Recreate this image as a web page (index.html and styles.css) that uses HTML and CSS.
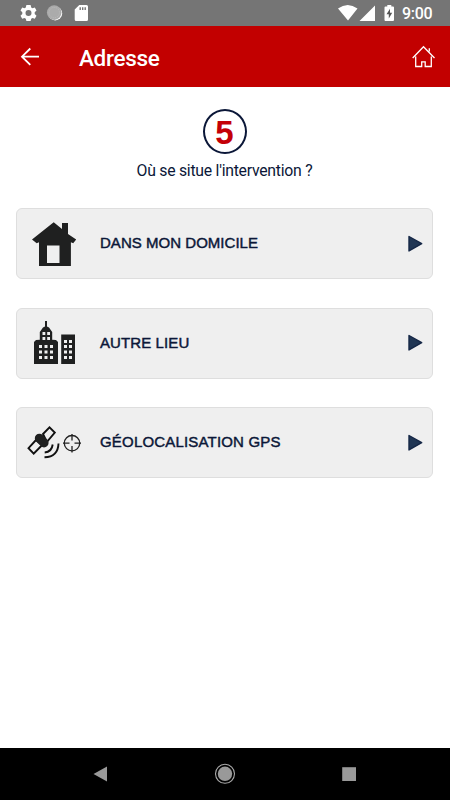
FILE: index.html
```html
<!DOCTYPE html>
<html lang="fr">
<head>
<meta charset="utf-8">
<title>Adresse</title>
<link rel="stylesheet" href="styles.css">
</head>
<body>
<div class="screen">
  <div class="status">
    <svg class="status-left" width="72" height="26" viewBox="20 0 72 26">
      <g fill="#fff">
        <path fill-rule="evenodd" d="M26.4 5h4.2l.6 2.5 1.3.8 2.3-.8 1.7 3-1.8 1.8v1.6l1.8 1.8-1.7 3-2.3-.8-1.3.8-.6 2.3h-4.2l-.6-2.3-1.3-.8-2.3.8-1.7-3 1.8-1.8v-1.6l-1.8-1.8 1.7-3 2.3.8 1.3-.8zM28.5 10.100a3 3 0 1 0 0 6 3 3 0 0 0 0-6z"/>
        <circle cx="55.200" cy="13.400" r="7"/>
        <path fill-rule="evenodd" d="M79.300 5h7.200q1.500 0 1.500 1.500v13q0 1.500-1.500 1.500h-10.300q-1.500 0-1.500-1.500v-10zM79.500 7.300v2.700h1.400V7.300zM82 7.300v2.700h1.400V7.300zM84.500 7.300v2.700h1.400V7.300z"/>
      </g>
      <circle cx="54.200" cy="12.600" r="7.300" fill="#ababab"/>
      <circle cx="54.200" cy="12.600" r="5.200" fill="none" stroke="#bcbcbc" stroke-dasharray="1 1"/>
    </svg>
    <div class="status-right">
      <svg width="60" height="26" viewBox="337 0 60 26">
        <path fill="#fff" d="M338 8.600Q347.700 1.600 357.500 8.600L348 20.600zM375 5.500V21h-15.500zM387.300 6.600V5h4v1.600h1.700q1 0 1 1v12.400q0 1-1 1h-7.500q-1 0-1-1V7.600q0-1 1-1z"/>
        <path fill="#555" d="M390 8.800l-3.500 5.400h2.300v4.400l3.400-5.800h-2.200z"/>
      </svg>
      <span class="clock">9:00</span>
    </div>
  </div>
  <header class="bar">
    <svg class="back" width="20" height="20" viewBox="20 47 20 20"><path d="M39 56.700H22M30.300 48.500L22 56.700l8.300 8.200" fill="none" stroke="#fff" stroke-width="1.800"/></svg>
    <h1 class="title">Adresse</h1>
    <svg width="24" height="24" viewBox="412 45 24 24"><path d="M412.700 58L423.500 46.700 434.500 58M415.700 56.500v10h6v-4.700h3.500v4.700h6.100v-10M429.300 51.500V48.200" fill="none" stroke="#fff" stroke-width="1.300"/></svg>
  </header>
  <main class="content">
    <div class="step">5</div>
    <p class="question">Où se situe l'intervention ?</p>
    <div class="choices">
      <div class="card">
        <svg class="pic" width="58" height="50" viewBox="26 218 58 50">
          <path fill="#1f2020" d="M53.700 221.300L62 228v-6h6v11l8.200 5.500-3 3.800-2.300-1V265H39v-23.700l-2.300 1-4.700-3.800z"/>
          <path fill="#efefef" d="M47 244.500h12.500V262H47z"/>
        </svg>
        <span class="label domicile">DANS MON DOMICILE</span>
        <svg class="go" width="16" height="18" viewBox="0 0 16 18"><path d="M2 1.500L14.700 8.700 2 15.900z"/></svg>
      </div>
      <div class="card">
        <svg class="pic" width="58" height="50" viewBox="26 318 58 50">
          <path fill="#1f2020" d="M45 321h2v5.500l2 1 3.200 4.500v7.700l3.800.3 2 2V364H34v-22l2-2 3.800-.3V332l3.200-4.500 2-1zM61.200 334.500H75V364H61.200z"/>
          <path fill="#efefef" d="M42.500 332h2.800v3h-2.800zm4.700 0H50v3h-2.800zM42.500 337h2.800v3h-2.800zm4.700 0H50v3h-2.800zM39 345h3v3h-3zm5.500 0h3v3h-3zm5.500 0h3v3h-3zM39 350.500h3v3h-3zm5.500 0h3v3h-3zm5.500 0h3v3h-3zM39 356h3v3h-3zm5.500 0h3v3h-3zm5.500 0h3v3h-3zM64 340h3v3h-3zm5 0h3v3h-3zM64 345h3v3h-3zm5 0h3v3h-3zM64 350.500h3v3h-3zm5 0h3v3h-3zM64 356h3v3h-3zm5 0h3v3h-3z"/>
        </svg>
        <span class="label lieu">AUTRE LIEU</span>
        <svg class="go" width="16" height="18" viewBox="0 0 16 18"><path d="M2 1.500L14.700 8.700 2 15.900z"/></svg>
      </div>
      <div class="card">
        <svg class="pic" width="58" height="50" viewBox="26 418 58 50">
          <g fill="none" stroke="#111" stroke-width="1.900">
            <path d="M43 434l6.500-6.700 5.300 5.300-8 9.400zM36 440l-7.500 8.200 5.200 5.500 8.500-8.700z"/>
            <path d="M52.700 444.500q-1 7.500-8 8M58.500 443.500q-.5 13.500-14 13.800"/>
          </g>
          <path d="M39.400 438.300l4.600 4.500" stroke="#1f2020" stroke-width="9.200" stroke-linecap="round"/>
          <g fill="none" stroke="#222" stroke-width="1.300"><circle cx="72" cy="443.200" r="7.700"/><path d="M63 443.200h6.500M74.500 443.200H81M72 434v6.500M72 446v6.500"/></g>
        </svg>
        <span class="label gps">GÉOLOCALISATION GPS</span>
        <svg class="go" width="16" height="18" viewBox="0 0 16 18"><path d="M2 1.500L14.700 8.700 2 15.900z"/></svg>
      </div>
    </div>
  </main>
  <nav class="nav">
    <svg width="22" height="22" viewBox="0 0 22 22"><path fill="#999" d="M3.500 11L17 3.500v15z"/></svg>
    <svg width="22" height="22" viewBox="0 0 22 22"><circle cx="11" cy="10.800" r="7.200" fill="#999"/><circle cx="11" cy="10.800" r="9.500" fill="none" stroke="#aaa" stroke-width="1.100"/></svg>
    <svg width="22" height="22" viewBox="0 0 22 22"><path fill="#999" d="M4.200 4.200H18V18H4.200z"/></svg>
  </nav>
</div>
</body>
</html>
```
FILE: styles.css
```css
* { box-sizing: border-box; }
body { margin: 0; background: #fff; font-family: Roboto, sans-serif; }
svg { display: block; flex: none; }
.screen { width: 450px; height: 800px; display: flex; flex-direction: column; overflow: hidden; }
.status { height: 26px; flex: none; display: flex; justify-content: space-between; padding: 0 17px 0 20px; background: #757575; }
.status-right { display: flex; gap: 5px; }
.clock { width: 31px; font-size: 16px; line-height: 27px; font-weight: 500; letter-spacing: -0.3px; color: #fff; white-space: nowrap; }
.bar { height: 61px; flex: none; display: flex; align-items: center; padding: 0 14px 0 20px; background: #c20000; }
.title { flex: 1; margin: 2px 0 0 39px; font-size: 22.5px; line-height: 28px; font-weight: 500; letter-spacing: -0.3px; color: #fff; }
.content { flex: 1; padding: 22px 17px 0 16px; }
.step { width: 44px; height: 45px; margin: 0 auto; border: 2px solid #0b1738; border-radius: 50%; text-align: center; font: bold 33px/43px "Liberation Sans", sans-serif; color: #c40007; }
.question { margin: 7px 0 0; text-align: center; font-size: 15.8px; line-height: 20px; letter-spacing: -0.26px; color: #0b1738; white-space: pre; }
.choices { display: grid; gap: 28.5px; margin-top: 27px; }
.card { height: 71px; display: flex; align-items: center; padding: 0 9px; border: 1px solid #dedede; border-radius: 6px; background: #efefef; }
.label { flex: 1; margin-left: 16px; padding-bottom: 1px; font: 15px/20px "Liberation Sans", sans-serif; color: #0b1738; -webkit-text-stroke: 0.45px #0b1738; white-space: nowrap; }
.domicile { letter-spacing: 0.03px; }
.lieu { letter-spacing: 0.1px; }
.gps { letter-spacing: 0.18px; }
.go { fill: #203654; stroke: #152746; stroke-width: 1.400; stroke-linejoin: round; }
.nav { height: 52px; flex: none; display: flex; justify-content: space-between; align-items: center; padding: 0 90px; background: #000; }
```
